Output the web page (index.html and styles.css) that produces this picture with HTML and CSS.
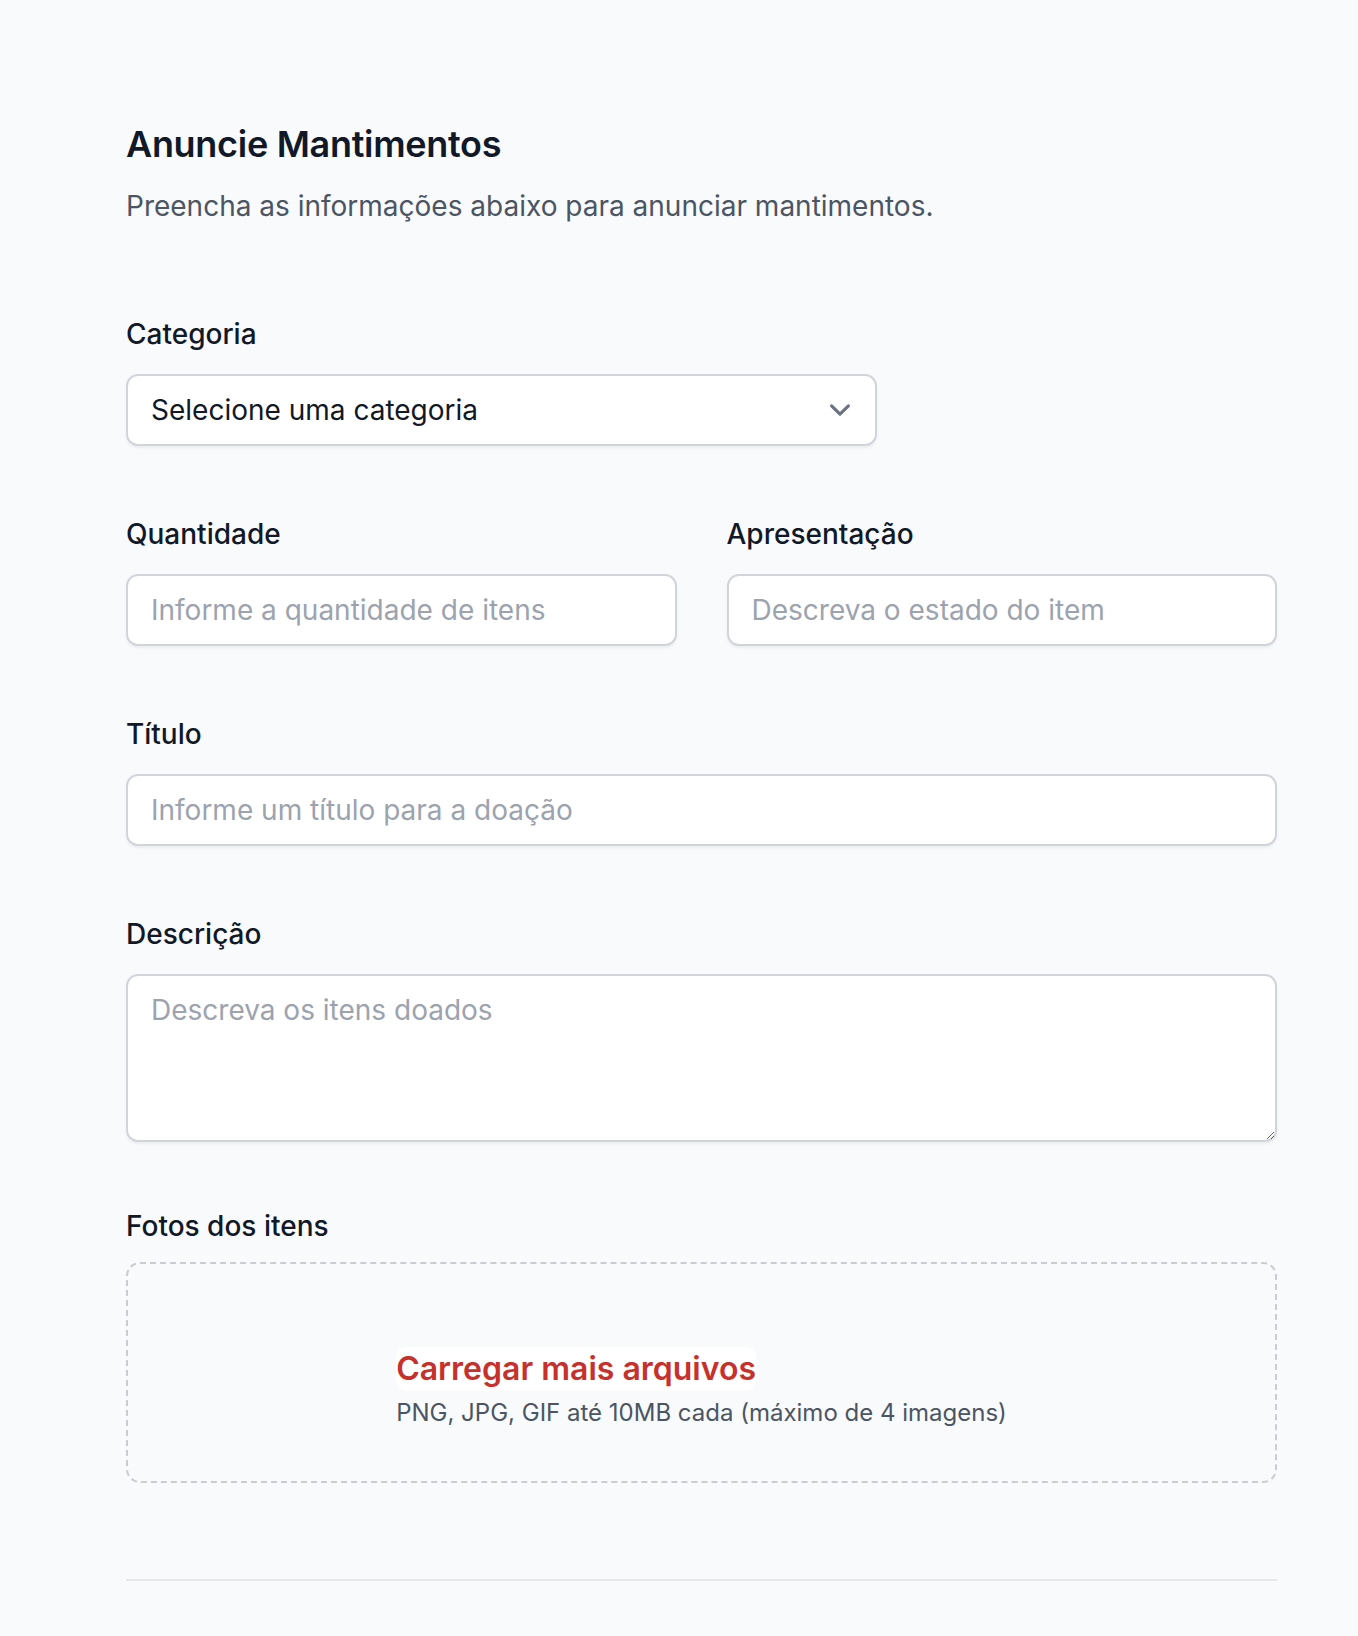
FILE: index.html
```html
<!DOCTYPE html>
<html lang="pt-BR">
<head>
<meta charset="utf-8">
<title>Anuncie Mantimentos</title>
<link rel="stylesheet" href="styles.css">
</head>
<body>
<main class="page">
  <header class="head">
    <h1 class="title">Anuncie Mantimentos</h1>
    <p class="subtitle">Preencha as informações abaixo para anunciar mantimentos.</p>
  </header>

  <form class="form">
    <div class="field field-narrow">
      <label class="label" for="cat">Categoria</label>
      <div class="select-wrap">
        <select id="cat" class="control select">
          <option>Selecione uma categoria</option>
        </select>
        <svg class="chevron" viewBox="0 0 20 20" aria-hidden="true"><path d="M6 8l4 4 4-4" fill="none" stroke="currentColor" stroke-width="1.5" stroke-linecap="round" stroke-linejoin="round"/></svg>
      </div>
    </div>

    <div class="row">
      <div class="field">
        <label class="label" for="qtd">Quantidade</label>
        <input id="qtd" class="control" type="text" placeholder="Informe a quantidade de itens">
      </div>
      <div class="field">
        <label class="label" for="apr">Apresentação</label>
        <input id="apr" class="control" type="text" placeholder="Descreva o estado do item">
      </div>
    </div>

    <div class="field">
      <label class="label" for="tit">Título</label>
      <input id="tit" class="control" type="text" placeholder="Informe um título para a doação">
    </div>

    <div class="field">
      <label class="label" for="desc">Descrição</label>
      <textarea id="desc" class="control textarea" placeholder="Descreva os itens doados"></textarea>
    </div>

    <div class="field field-photos">
      <span class="label">Fotos dos itens</span>
      <div class="dropzone">
        <div class="drop-inner">
          <span class="upload-link">Carregar mais arquivos</span>
          <span class="upload-hint">PNG, JPG, GIF até 10MB cada (máximo de 4 imagens)</span>
        </div>
      </div>
    </div>
  </form>

  <hr class="divider">
</main>
</body>
</html>
```

FILE: styles.css
```css
* { box-sizing: border-box; }

html, body {
  margin: 0;
  padding: 0;
  background: #f9fafb;
}

body {
  font-family: Inter, "Noto Sans", "Liberation Sans", sans-serif;
  color: #111827;
  height: 1636px;
  overflow: hidden;
}

.page {
  width: 1151px;
  margin-left: 126px;
  padding-top: 116px;
}

.title {
  margin: 0;
  font-size: 36px;
  line-height: 56px;
  font-weight: 600;
  color: #111827;
  letter-spacing: -0.3px;
}

.subtitle {
  margin: 10px 0 0;
  font-size: 28px;
  line-height: 48px;
  color: #4b5563;
}

.form {
  margin-top: 80px;
  display: flex;
  flex-direction: column;
  gap: 64px;
}

.field {
  display: flex;
  flex-direction: column;
  gap: 16px;
}

.field-narrow {
  width: 751px;
}

.field-photos {
  margin-top: -4px;
}

.row {
  display: grid;
  grid-template-columns: 1fr 1fr;
  column-gap: 50px;
}

.label {
  font-size: 28px;
  line-height: 48px;
  font-weight: 500;
  color: #111827;
}

.control {
  display: block;
  width: 100%;
  height: 72px;
  margin: 0;
  padding: 0 23px;
  font-family: inherit;
  font-size: 28px;
  color: #111827;
  background: #fff;
  border: 2px solid #d1d5db;
  border-radius: 12px;
  box-shadow: 0 2px 3px rgba(0, 0, 0, 0.06);
  outline: none;
}

.control::placeholder {
  color: #9ca3af;
  opacity: 1;
}

.select-wrap {
  position: relative;
}

.select {
  appearance: none;
  -webkit-appearance: none;
}

.chevron {
  position: absolute;
  right: 16px;
  top: 50%;
  width: 42px;
  height: 42px;
  margin-top: -21px;
  color: #6b7280;
  pointer-events: none;
}

.textarea {
  height: 168px;
  padding-top: 10px;
  line-height: 48px;
  resize: vertical;
}

.dropzone {
  height: 221px;
  border: 2px dashed #c9ccd2;
  border-radius: 14px;
  display: flex;
  align-items: center;
  justify-content: center;
  margin-top: -4px;
}

.drop-inner {
  display: flex;
  flex-direction: column;
  align-items: flex-start;
  margin-top: 34px;
}

.upload-link {
  font-size: 32px;
  line-height: 44px;
  font-weight: 600;
  color: #c8302b;
  background: #fff;
  border-radius: 10px;
}

.upload-hint {
  margin-top: 2px;
  font-size: 24px;
  line-height: 40px;
  color: #4b5563;
}

.divider {
  margin: 96px 0 0;
  border: 0;
  border-top: 2px solid #e5e7eb;
}
```
